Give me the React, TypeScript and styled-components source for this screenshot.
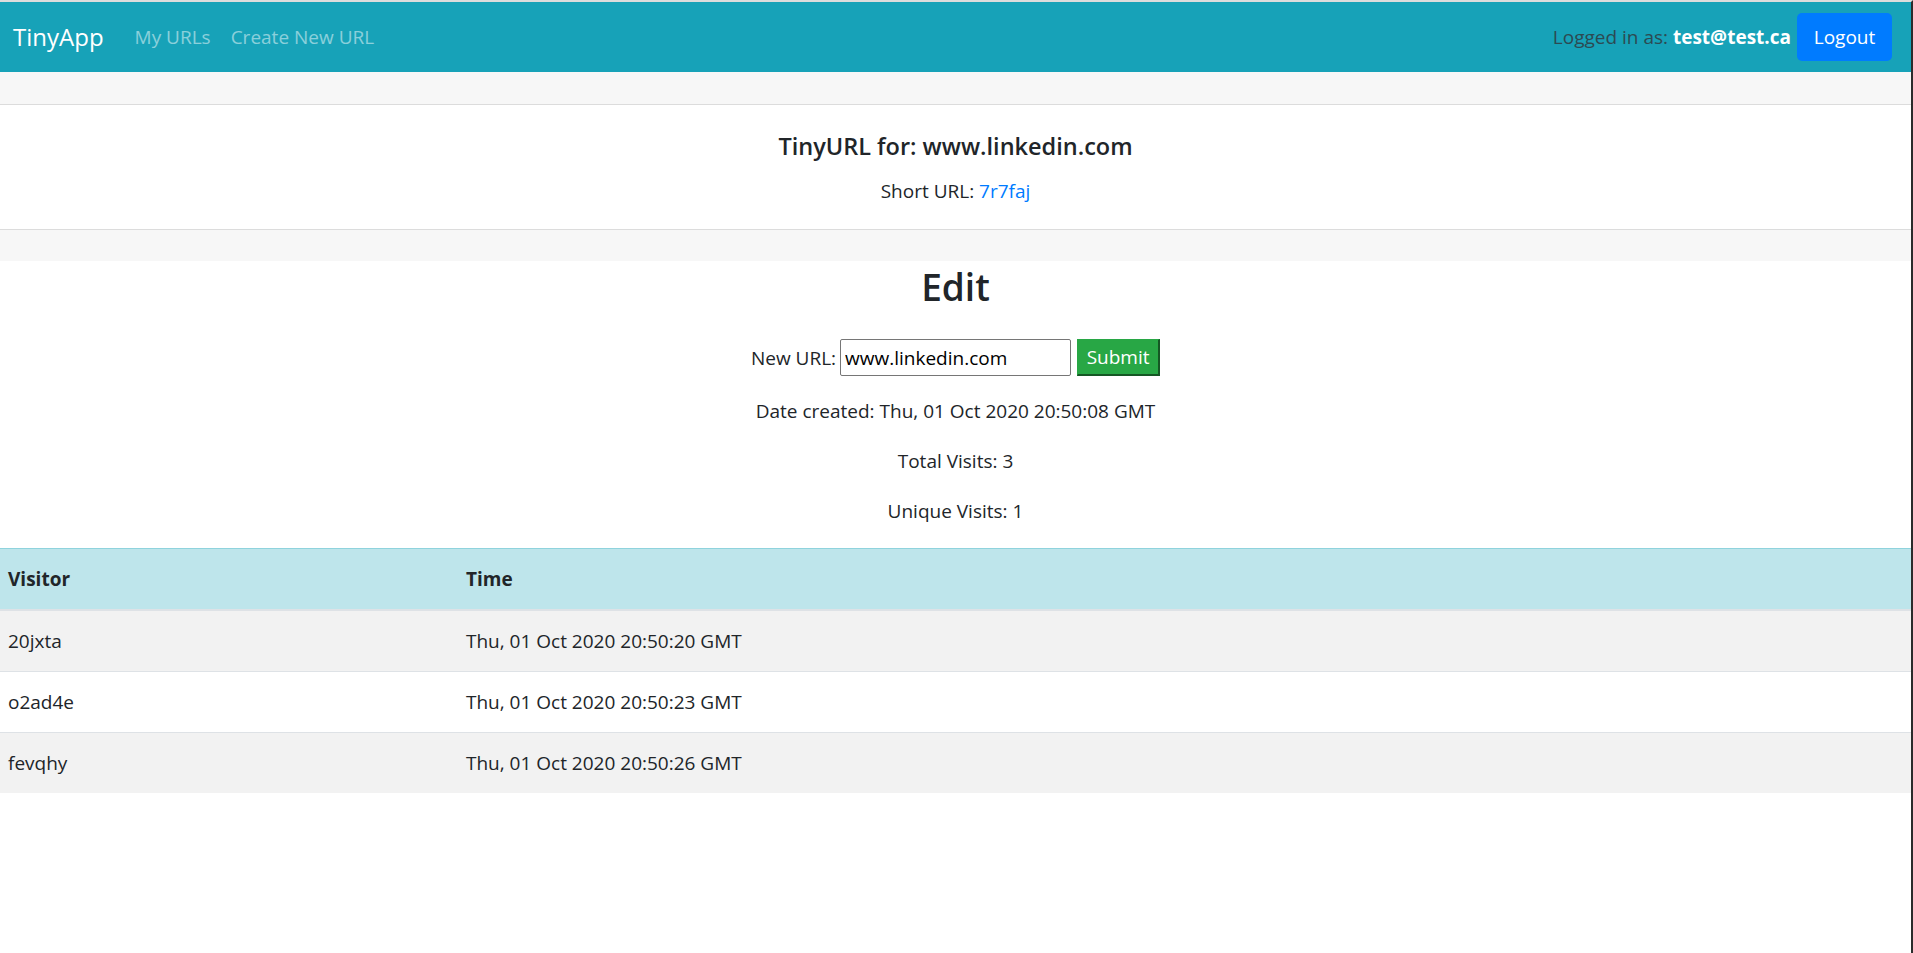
import React from "react";
import styled, { createGlobalStyle } from "styled-components";

const GlobalStyle = createGlobalStyle`
  html, body {
    margin: 0;
    padding: 0;
    background: #ffffff;
  }
  body {
    font-family: "Open Sans", "Noto Sans", "Liberation Sans", sans-serif;
    color: #212529;
    font-size: 19px;
    line-height: 30px;
  }
  * { box-sizing: border-box; }
`;

const Frame = styled.div`
  border-top: 2px solid #dcdcdc;
  border-right: 2px solid #2b2b2b;
  min-height: 953px;
  background: #ffffff;
`;

const Navbar = styled.nav`
  height: 70px;
  background: #17a2b8;
  display: flex;
  align-items: center;
  padding: 0 19px 0 13px;
`;

const Brand = styled.a`
  font-size: 24px;
  color: #ffffff;
  text-decoration: none;
  margin-right: 31px;
  line-height: 30px;
`;

const NavLink = styled.a`
  font-size: 19px;
  color: rgba(255, 255, 255, 0.5);
  text-decoration: none;
  margin-right: 20px;
`;

const Spacer = styled.div`
  flex: 1;
`;

const NavText = styled.span`
  font-size: 19px;
  color: #2c4a52;
  margin-right: 6px;
  b {
    color: #ffffff;
    font-weight: 700;
  }
`;

const LogoutButton = styled.button`
  width: 95px;
  height: 48px;
  background: #007bff;
  border: none;
  border-radius: 5px;
  color: #ffffff;
  font-family: inherit;
  font-size: 19px;
  padding: 0;
`;

const Band = styled.div<{ $h: number }>`
  height: ${(p) => p.$h}px;
  background: #f7f7f7;
`;

const Card = styled.section`
  background: #ffffff;
  border-top: 1px solid #dcdcdc;
  border-bottom: 1px solid #dcdcdc;
  text-align: center;
  padding: 26px 0 23px;
`;

const Title = styled.h5`
  margin: 0 0 15px;
  font-size: 23.5px;
  font-weight: 600;
  line-height: 30px;
`;

const Para = styled.p<{ $mb?: number }>`
  margin: 0 0 ${(p) => p.$mb ?? 0}px;
  font-size: 19px;
  line-height: 30px;
`;

const Link = styled.a`
  color: #007bff;
  text-decoration: none;
`;

const EditSection = styled.section`
  text-align: center;
  padding-top: 4px;
`;

const Heading = styled.h2`
  margin: 0 0 30px;
  font-size: 37px;
  font-weight: 600;
  line-height: 44px;
`;

const Form = styled.form`
  display: flex;
  justify-content: center;
  align-items: center;
  gap: 4px;
  margin-bottom: 20px;
  font-size: 19px;
`;

const Input = styled.input`
  width: 231px;
  height: 37px;
  border: 1px solid #767676;
  border-radius: 2px;
  font-family: inherit;
  font-size: 19px;
  padding: 0 4px;
  color: #000000;
`;

const SubmitButton = styled.button`
  width: 83px;
  height: 37px;
  background: #28a745;
  color: #ffffff;
  font-family: inherit;
  font-size: 19px;
  padding: 0;
  border-style: solid;
  border-width: 1px 2px 2px 1px;
  border-color: #28a745 #155724 #155724 #28a745;
  margin-left: 2px;
`;

const Table = styled.table`
  width: 100%;
  border-collapse: collapse;
  margin-top: 22px;
  font-size: 19px;
  line-height: 30px;
  text-align: left;
`;

const HeadCell = styled.th<{ $w?: number }>`
  background: #bee5eb;
  border-top: 1px solid #8fd3dd;
  border-bottom: 2px solid #dee2e6;
  padding: 15px 8px;
  font-weight: 700;
  width: ${(p) => (p.$w ? `${p.$w}px` : "auto")};
`;

const Row = styled.tr<{ $striped: boolean }>`
  background: ${(p) => (p.$striped ? "#f2f2f2" : "#ffffff")};
`;

const Cell = styled.td`
  border-top: 1px solid #dee2e6;
  padding: 15px 8px;
`;

const visits = [
  { id: "20jxta", time: "Thu, 01 Oct 2020 20:50:20 GMT" },
  { id: "o2ad4e", time: "Thu, 01 Oct 2020 20:50:23 GMT" },
  { id: "fevqhy", time: "Thu, 01 Oct 2020 20:50:26 GMT" },
];

export default function App() {
  return (
    <>
      <GlobalStyle />
      <Frame>
        <Navbar>
          <Brand href="#">TinyApp</Brand>
          <NavLink href="#">My URLs</NavLink>
          <NavLink href="#">Create New URL</NavLink>
          <Spacer />
          <NavText>
            Logged in as: <b>test@test.ca</b>
          </NavText>
          <LogoutButton>Logout</LogoutButton>
        </Navbar>
        <Band $h={32} />
        <Card>
          <Title>TinyURL for: www.linkedin.com</Title>
          <Para>
            Short URL: <Link href="#">7r7faj</Link>
          </Para>
        </Card>
        <Band $h={31} />
        <EditSection>
          <Heading>Edit</Heading>
          <Form onSubmit={(e) => e.preventDefault()}>
            <label>New URL:</label>
            <Input defaultValue="www.linkedin.com" />
            <SubmitButton type="submit">Submit</SubmitButton>
          </Form>
          <Para $mb={20}>Date created: Thu, 01 Oct 2020 20:50:08 GMT</Para>
          <Para $mb={20}>Total Visits: 3</Para>
          <Para>Unique Visits: 1</Para>
        </EditSection>
        <Table>
          <thead>
            <tr>
              <HeadCell $w={458}>Visitor</HeadCell>
              <HeadCell>Time</HeadCell>
            </tr>
          </thead>
          <tbody>
            {visits.map((v, i) => (
              <Row key={v.id} $striped={i % 2 === 0}>
                <Cell>{v.id}</Cell>
                <Cell>{v.time}</Cell>
              </Row>
            ))}
          </tbody>
        </Table>
      </Frame>
    </>
  );
}
